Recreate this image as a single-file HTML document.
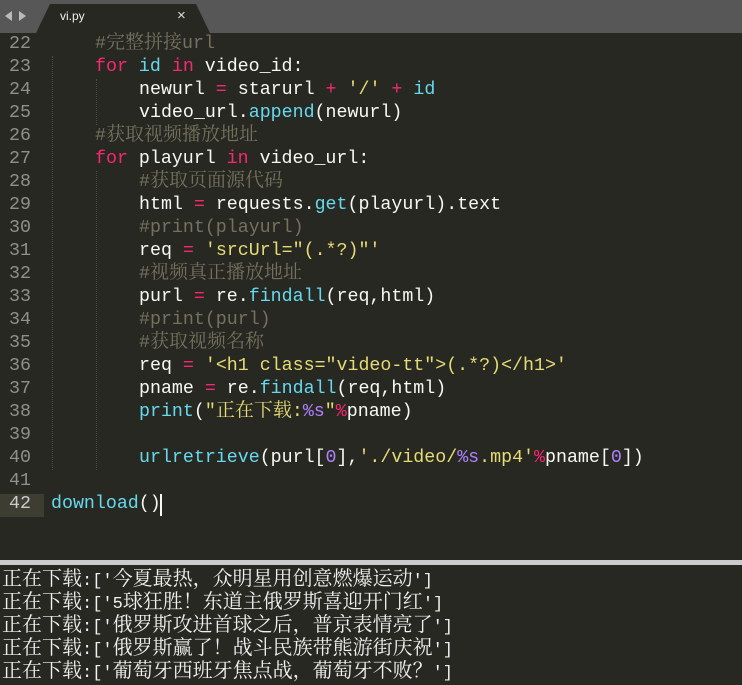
<!DOCTYPE html>
<html><head><meta charset="utf-8"><style>
body{margin:0;width:742px;height:678px;overflow:hidden;background:#272822;position:relative;font-family:"Liberation Mono","Noto Serif CJK SC",monospace}
.tabbar{position:absolute;left:0;top:0;width:742px;height:33px;background:#575757}
.code{position:absolute;left:0;top:33px;width:742px;}
.ln{position:absolute;left:0;width:31px;text-align:right;color:#90908a;font-size:18.3px;height:23px;line-height:23px}
.l{position:absolute;left:51px;white-space:pre;color:#f8f8f2;font-size:18.3px;height:23px;line-height:23px}
.k{color:#f92672}.c{color:#75715e}.s{color:#e6db74}.f{color:#66d9ef}.n{color:#ae81ff}
.z{font-family:"Noto Serif CJK SC",serif;font-size:19px;line-height:0}
.out{position:absolute;left:2px;top:569px;width:742px;color:#f0f0f0;font-family:"Liberation Mono","Noto Serif CJK SC",serif;font-size:20px;line-height:23px;white-space:nowrap}
.out div{height:23px;line-height:23px}
.out .a{font-size:17px;}
.guide{position:absolute;width:0;border-left:1px dotted #4a4a44}
</style></head><body>
<div class="tabbar">
<div style="position:absolute;left:5px;top:11px;width:0;height:0;border-top:5px solid transparent;border-bottom:5px solid transparent;border-right:7px solid #bbb"></div>
<div style="position:absolute;left:19px;top:11px;width:0;height:0;border-top:5px solid transparent;border-bottom:5px solid transparent;border-left:7px solid #bbb"></div>
<svg style="position:absolute;left:36px;top:4px" width="174" height="29"><path d="M0 29 L14 0 L160 0 L174 29 Z" fill="#272822"/></svg>
<div style="position:absolute;left:60px;top:9px;color:#eee;font-family:'Liberation Sans',sans-serif;font-size:12px">vi.py</div>
<div style="position:absolute;left:177px;top:7px;color:#ddd;font-family:'Liberation Sans',sans-serif;font-size:15px">×</div>
</div>
<div style="position:absolute;left:0;top:494px;width:44px;height:23px;background:#3e3d32"></div>
<div class="guide" style="left:52px;top:56px;height:414px"></div>
<div class="guide" style="left:96px;top:79px;height:46px"></div>
<div class="guide" style="left:96px;top:171px;height:299px"></div>
<div class="code" id="c"></div>
<div style="position:absolute;left:160px;top:494px;width:2px;height:22px;background:#f8f8f2"></div>
<div style="position:absolute;left:0;top:560px;width:742px;height:5px;background:#cbcbcb"></div>
<div class="out"><div>正在下载<span class="a">:['</span>今夏最热，众明星用创意燃爆运动<span class="a">']</span></div><div>正在下载<span class="a">:['5</span>球狂胜！东道主俄罗斯喜迎开门红<span class="a">']</span></div><div>正在下载<span class="a">:['</span>俄罗斯攻进首球之后，普京表情亮了<span class="a">']</span></div><div>正在下载<span class="a">:['</span>俄罗斯赢了！战斗民族带熊游街庆祝<span class="a">']</span></div><div>正在下载<span class="a">:['</span>葡萄牙西班牙焦点战，葡萄牙不败？<span class="a">']</span></div></div>
<script>
var L=[
'    <span class="c">#<span class="z">完整拼接</span>url</span>',
'    <span class="k">for</span> <span class="f">id</span> <span class="k">in</span> video_id:',
'        newurl <span class="k">=</span> starurl <span class="k">+</span> <span class="s">\'/\'</span> <span class="k">+</span> <span class="f">id</span>',
'        video_url.<span class="f">append</span>(newurl)',
'    <span class="c">#<span class="z">获取视频播放地址</span></span>',
'    <span class="k">for</span> playurl <span class="k">in</span> video_url:',
'        <span class="c">#<span class="z">获取页面源代码</span></span>',
'        html <span class="k">=</span> requests.<span class="f">get</span>(playurl).text',
'        <span class="c">#print(playurl)</span>',
'        req <span class="k">=</span> <span class="s">\'srcUrl="(.*?)"\'</span>',
'        <span class="c">#<span class="z">视频真正播放地址</span></span>',
'        purl <span class="k">=</span> re.<span class="f">findall</span>(req,html)',
'        <span class="c">#print(purl)</span>',
'        <span class="c">#<span class="z">获取视频名称</span></span>',
'        req <span class="k">=</span> <span class="s">\'&lt;h1 class="video-tt"&gt;(.*?)&lt;/h1&gt;\'</span>',
'        pname <span class="k">=</span> re.<span class="f">findall</span>(req,html)',
'        <span class="f">print</span>(<span class="s">"<span class="z">正在下载</span>:<span class="n">%s</span>"</span><span class="k">%</span>pname)',
'',
'        <span class="f">urlretrieve</span>(purl[<span class="n">0</span>],<span class="s">\'./video/<span class="n">%s</span>.mp4\'</span><span class="k">%</span>pname[<span class="n">0</span>])',
'',
'<span class="f">download</span>()'];
var h='';for(var i=0;i<L.length;i++){var t=i*23;h+='<div class="ln" style="top:'+t+'px'+(i==20?';color:#ccc':'')+'">'+(22+i)+'</div><div class="l" style="top:'+t+'px">'+L[i].replace(/^ {4,8}/,'')+'</div>';}
document.getElementById('c').innerHTML=h;
var ls=document.querySelectorAll('.l');for(var i=0;i<L.length;i++){var m=L[i].match(/^ */)[0].length;ls[i].style.left=(51+m*11)+'px';}
</script>
</body></html>
